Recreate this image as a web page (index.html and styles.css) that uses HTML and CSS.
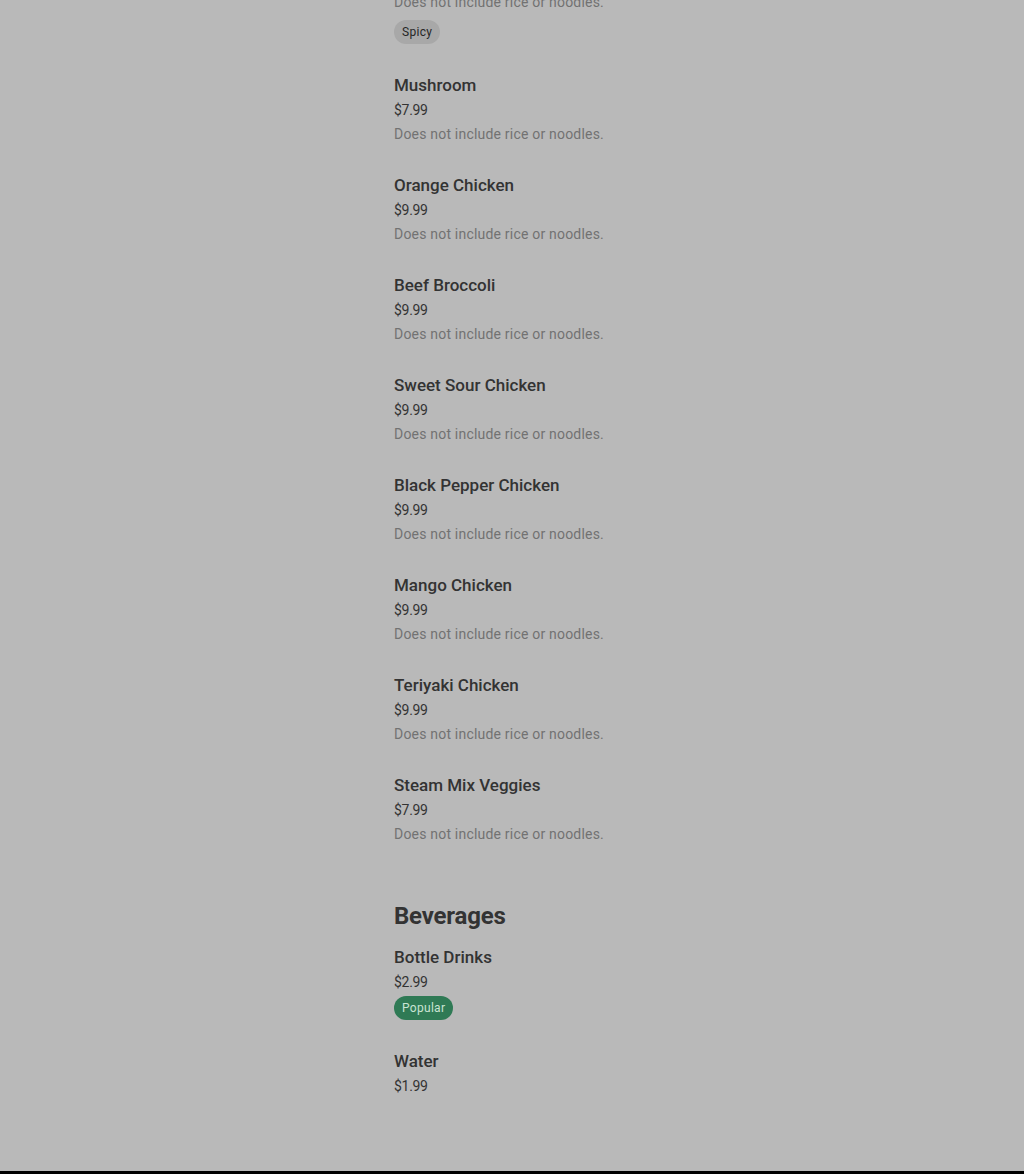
FILE: index.html
```html
<!DOCTYPE html>
<html lang="en">
<head>
<meta charset="utf-8">
<title>Menu</title>
<link rel="stylesheet" href="styles.css">
</head>
<body>
<main class="menu">
  <section class="category category-cut">
    <div class="item">
      <p class="desc">Does not include rice or noodles.</p>
      <span class="tag tag-spicy">Spicy</span>
    </div>
    <div class="item">
      <h3 class="name">Mushroom</h3>
      <p class="price">$7.99</p>
      <p class="desc">Does not include rice or noodles.</p>
    </div>
    <div class="item">
      <h3 class="name">Orange Chicken</h3>
      <p class="price">$9.99</p>
      <p class="desc">Does not include rice or noodles.</p>
    </div>
    <div class="item">
      <h3 class="name">Beef Broccoli</h3>
      <p class="price">$9.99</p>
      <p class="desc">Does not include rice or noodles.</p>
    </div>
    <div class="item">
      <h3 class="name">Sweet Sour Chicken</h3>
      <p class="price">$9.99</p>
      <p class="desc">Does not include rice or noodles.</p>
    </div>
    <div class="item">
      <h3 class="name">Black Pepper Chicken</h3>
      <p class="price">$9.99</p>
      <p class="desc">Does not include rice or noodles.</p>
    </div>
    <div class="item">
      <h3 class="name">Mango Chicken</h3>
      <p class="price">$9.99</p>
      <p class="desc">Does not include rice or noodles.</p>
    </div>
    <div class="item">
      <h3 class="name">Teriyaki Chicken</h3>
      <p class="price">$9.99</p>
      <p class="desc">Does not include rice or noodles.</p>
    </div>
    <div class="item">
      <h3 class="name">Steam Mix Veggies</h3>
      <p class="price">$7.99</p>
      <p class="desc">Does not include rice or noodles.</p>
    </div>
  </section>
  <section class="category category-bev">
    <h2 class="cat-title">Beverages</h2>
    <div class="item">
      <h3 class="name">Bottle Drinks</h3>
      <p class="price">$2.99</p>
      <span class="tag tag-popular">Popular</span>
    </div>
    <div class="item">
      <h3 class="name">Water</h3>
      <p class="price">$1.99</p>
    </div>
  </section>
</main>
<footer class="footer"></footer>
</body>
</html>
```

FILE: styles.css
```css
* { box-sizing: border-box; }
html, body {
  margin: 0;
  padding: 0;
  background: #b9b9b9;
}
body {
  font-family: Roboto, "Liberation Sans", sans-serif;
  color: #2f2f2f;
  overflow: hidden;
  height: 1174px;
  display: flex;
  flex-direction: column;
}
.menu {
  padding-left: 394px;
  display: flex;
  flex-direction: column;
}
.category {
  display: flex;
  flex-direction: column;
  gap: 29px;
}
.category-cut {
  margin-top: -12px;
}
.category-bev {
  margin-top: 56px;
  gap: 0;
}
.category-bev .item + .item {
  margin-top: 29px;
}
.cat-title {
  margin: 0 0 13px;
  font-size: 24px;
  line-height: 32px;
  font-weight: 700;
  color: #333333;
  letter-spacing: -0.2px;
}
.item {
  display: flex;
  flex-direction: column;
  align-items: flex-start;
}
.name {
  margin: 0;
  font-size: 17px;
  line-height: 24px;
  font-weight: 500;
  color: #333333;
}
.price {
  margin: 3px 0 0;
  font-size: 14px;
  line-height: 20px;
  color: #333333;
  letter-spacing: -0.3px;
}
.desc {
  margin: 4px 0 0;
  font-size: 14px;
  line-height: 20px;
  color: #727272;
  letter-spacing: 0.2px;
}
.tag {
  display: inline-flex;
  align-items: center;
  height: 24px;
  padding: 0 8px;
  border-radius: 12px;
  font-size: 12px;
  letter-spacing: 0.3px;
}
.desc + .tag { margin-top: 8px; }
.price + .tag { margin-top: 4px; }
.tag-spicy {
  background: #a8a8a8;
  color: #262626;
}
.tag-popular {
  background: #2f7a55;
  color: #c9e4d3;
}
.footer {
  margin-top: auto;
  height: 3px;
  background: #000;
  flex-shrink: 0;
}
```
